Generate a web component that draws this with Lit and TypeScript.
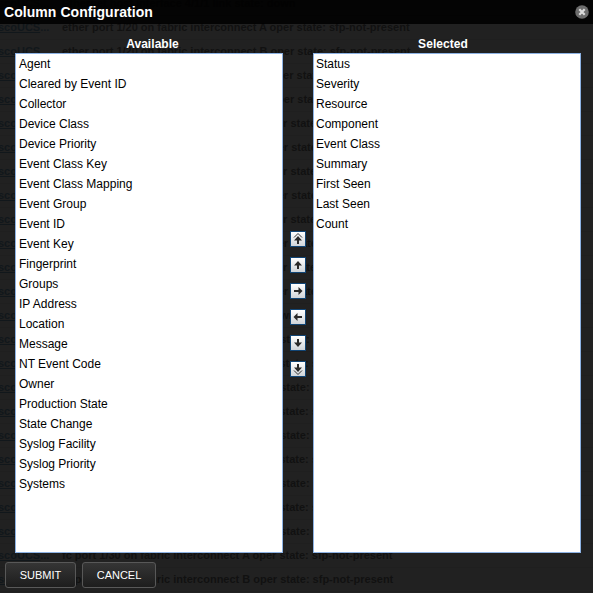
import { LitElement, html, css, svg } from "lit";
import { customElement, property } from "lit/decorators.js";
import { classMap } from "lit/directives/class-map.js";

const AVAILABLE = ["Agent", "Cleared by Event ID", "Collector", "Device Class", "Device Priority", "Event Class Key",
  "Event Class Mapping", "Event Group", "Event ID", "Event Key", "Fingerprint", "Groups", "IP Address", "Location",
  "Message", "NT Event Code", "Owner", "Production State", "State Change", "Syslog Facility", "Syslog Priority", "Systems"];
const SELECTED = ["Status", "Severity", "Resource", "Component", "Event Class", "Summary", "First Seen", "Last Seen", "Count"];

// Event summaries of the grid that lies under the dialog.
const EVENTS: string[] = Array.from({ length: 25 }, (_, i) => {
  if (i === 0 || i === 13) return "Ethernet host interface 4/1/1 link state: down";
  const side = i % 2 ? "A" : "B";
  const port = i < 5 ? "ether port 1/20" : i < 13 ? "ether port 1/9" : "fc port 1/30";
  return `${port} on fabric interconnect ${side} oper state: sfp-not-present`;
});

const ICONS: Record<string, ReturnType<typeof svg>> = {
  top: svg`<path d="M4 6.500 8 2.500l4 4" fill="none" stroke="#333" stroke-width="1"/><path d="M8 5 12 9.500H9V13H7V9.500H4z"/>`,
  up: svg`<path d="M8 4 12 8.500H9V12H7V8.500H4z"/>`,
  right: svg`<path d="M12.500 8 8.500 12V9H4V7h4.500V4z"/>`,
  left: svg`<path d="M3.500 8 7.500 4v3H12v2H7.500v3z"/>`,
  down: svg`<path d="M8 12 4 7.500h3V4h2v3.500h3z"/>`,
  bottom: svg`<path d="M4 9.500l4 4 4-4" fill="none" stroke="#333" stroke-width="1"/><path d="M8 11 4 6.500h3V3h2v3.500h3z"/>`,
};

@customElement("move-button")
export class MoveButton extends LitElement {
  @property() kind = "up";
  static styles = css`
    :host { display: block; width: 16px; height: 16px; }
    .btn { display: block; box-sizing: border-box; width: 16px; height: 16px; padding: 0; border: 1px solid #114575;
      background: linear-gradient(#fff, #e8eaec 50%, #cfd4d9); }
    svg { display: block; margin: -1px; fill: #292929; }
  `;
  render() {
    return html`<button class="btn" aria-label=${this.kind}><svg width="16" height="16" viewBox="0 0 16 16">${ICONS[this.kind]}</svg></button>`;
  }
}

@customElement("column-list")
export class ColumnList extends LitElement {
  @property() heading = "";
  @property({ attribute: false }) items: string[] = [];
  static styles = css`
    :host { display: flex; flex-direction: column; }
    .heading { height: 16px; line-height: 16px; margin-top: 12px; padding-left: var(--heading-left, 0); padding-right: var(--heading-right, 0); text-align: center; color: #fff; font-weight: bold; font-size: 12px; letter-spacing: .05px; }
    .box { box-sizing: border-box; height: 500px; margin-top: 1px; border: 1px solid #8db2e3; background: #fff; }
    .item { height: 20px; line-height: 20px; padding-left: var(--item-left, 3px); color: #000; font-size: 12px; white-space: nowrap; }
  `;
  render() {
    return html`<div class="heading">${this.heading}</div>
      <div class="box">${this.items.map((t) => html`<div class="item">${t}</div>`)}</div>`;
  }
}

@customElement("app-root")
export class AppRoot extends LitElement {
  static styles = css`
    :host { display: block; position: relative; width: 593px; height: 593px; overflow: hidden; background: #212121; font-family: "Liberation Sans", Arial, sans-serif; }
    .grid { position: absolute; inset: -8px 0 0; color: #111; font-size: 11px; font-weight: bold; }
    .row { display: flex; box-sizing: border-box; height: 24px; line-height: 23px; border-bottom: 1px solid #1f1f1f; white-space: nowrap; }
    .device { width: 64px; margin-left: -2px; color: #11171b; }
    .link { text-decoration: underline; }
    .dialog { position: relative; display: flex; flex-direction: column; height: 593px; }
    .title { flex: none; display: flex; align-items: center; justify-content: space-between; box-sizing: border-box; height: 24px; padding: 0 4px; background: rgba(0, 0, 0, .88); color: #fff; font-size: 14px; font-weight: bold; }
    .heading-text { letter-spacing: .06px; }
    .close { display: block; width: 14px; height: 14px; margin-top: -1px; }
    .lists { flex: none; display: grid; grid-template-columns: 268px 30px 268px; padding-left: 15px; height: 529px; }
    .available { --heading-left: 7px; }
    .selected { --heading-right: 8px; --item-left: 2px; }
    .moves { display: flex; flex-direction: column; align-items: center; gap: 10px; padding-top: 207px; }
    .footer { display: flex; gap: 6px; padding: 9px 5px; }
    .action { box-sizing: border-box; width: 71px; height: 26px; padding: 0; border: 1px solid #585858; border-radius: 3px; background: linear-gradient(#353535, #1d1d1d); color: #fff; font: 11px "Liberation Sans", Arial, sans-serif; }
    .wide { width: 74px; }
  `;
  render() {
    return html`
      <div class="grid" aria-hidden="true">
        ${EVENTS.map((e) => html`
          <div class="row"><span class="device"><span class="link">scoUCS</span>...</span><span class="summary">${e}</span></div>`)}
      </div>
      <div class="dialog">
        <div class="title"><span class="heading-text">Column Configuration</span>
          <svg class="close" viewBox="0 0 14 14"><circle cx="7" cy="7" r="6.800" fill="#6d6d6d"/><path d="M4.300 4.300l5.400 5.400m0-5.400-5.400 5.400" stroke="#ddd" stroke-width="2.200"/></svg>
        </div>
        <div class="lists">
          <column-list class="available" heading="Available" .items=${AVAILABLE}></column-list>
          <div class="moves">${Object.keys(ICONS).map((k) => html`<move-button kind=${k}></move-button>`)}</div>
          <column-list class="selected" heading="Selected" .items=${SELECTED}></column-list>
        </div>
        <div class="footer">${["SUBMIT", "CANCEL"].map((t, i) => html`<button class=${classMap({ action: true, wide: i === 1 })}>${t}</button>`)}</div>
      </div>`;
  }
}
